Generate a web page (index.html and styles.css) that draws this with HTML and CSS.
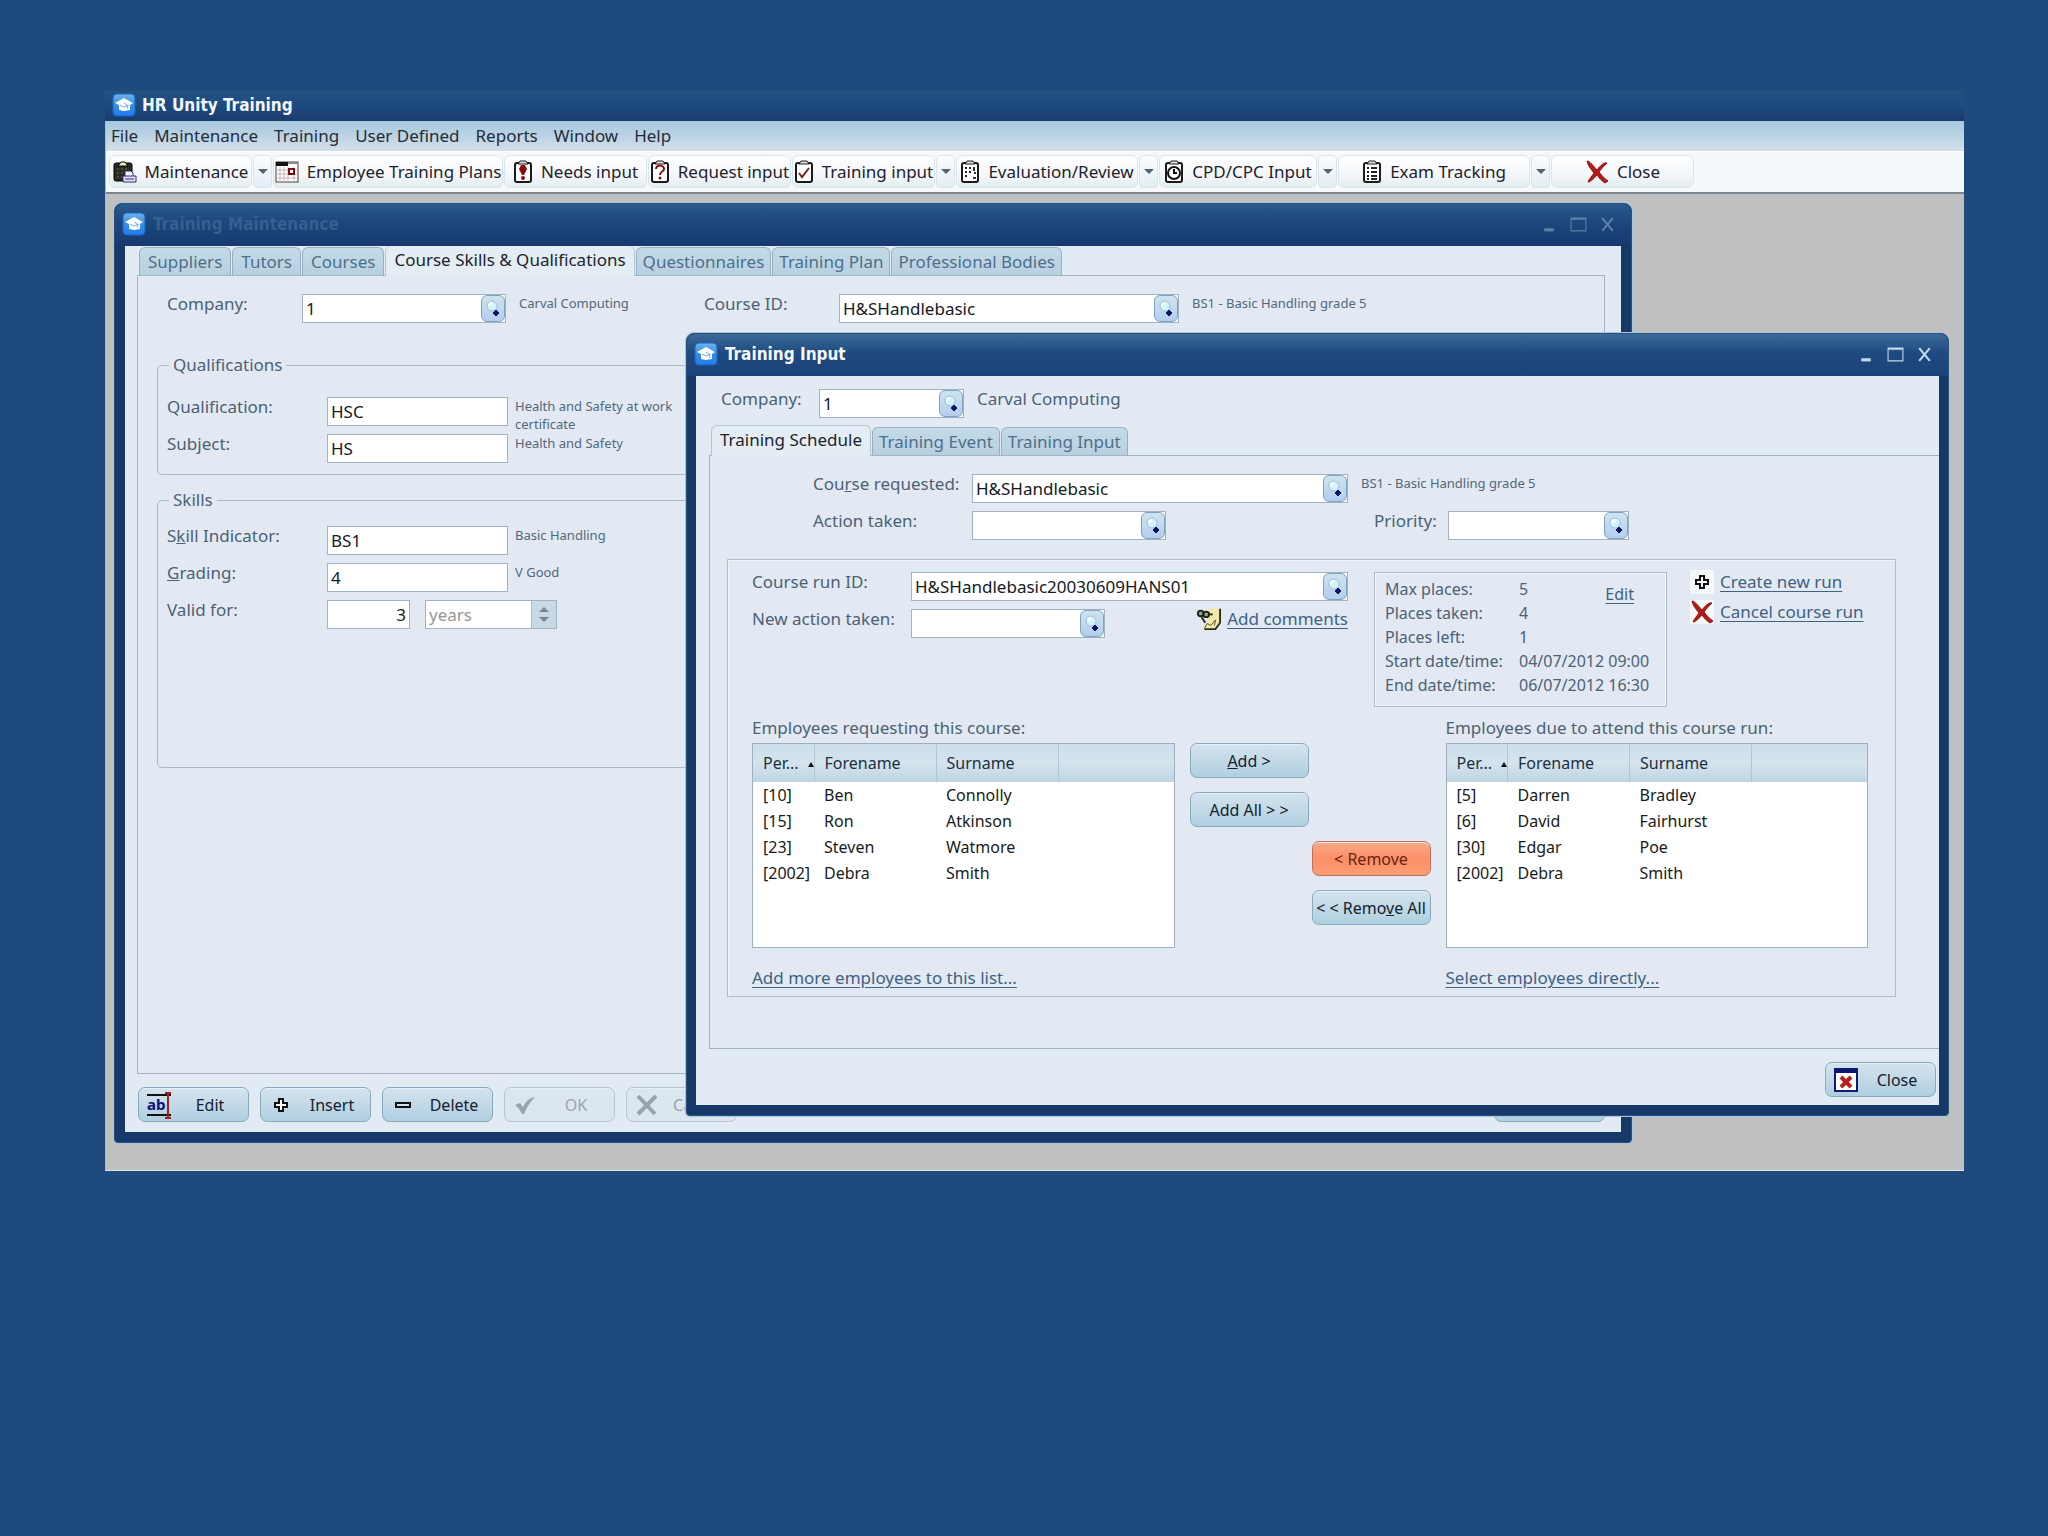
FILE: index.html
```html
<!DOCTYPE html>
<html lang="en">
<head>
<meta charset="utf-8">
<title>HR Unity Training</title>
<link rel="stylesheet" href="styles.css">
</head>
<body>
<svg class="sprite" aria-hidden="true">
  <defs>
    <linearGradient id="g-app" x1="0" y1="0" x2="0" y2="1">
      <stop offset="0" stop-color="#6fb2ea"/><stop offset="0.5" stop-color="#3a8ee0"/><stop offset="1" stop-color="#1d7cf2"/>
    </linearGradient>
    <symbol id="i-app" viewBox="0 0 24 24">
      <rect x="1" y="1" width="22" height="22" rx="4" fill="url(#g-app)" stroke="#1668c4"/>
      <path d="M12 5 L21 10 L18 12 L18 17 L12 18 L7 17 L7 12 L3 10 Z" fill="#fff"/>
      <path d="M8 12 L12 14 L17 12 M12 10 L15 12 L16 16" fill="none" stroke="#6fabe6"/>
    </symbol>
    <symbol id="i-lookup" viewBox="0 0 22 25">
      <circle cx="10" cy="10" r="5" fill="#d3f4fb" stroke="#9cc0d8"/>
      <path d="M7 10 A3 3 0 0 1 10 7" fill="none" stroke="#fff" stroke-width="2"/>
      <path d="M11 17 L14 14 L17 17 L14 20 Z" fill="#0b1466" stroke="#0b1466"/>
    </symbol>
    <symbol id="i-maint" viewBox="0 0 24 24">
      <rect x="1" y="3" width="18" height="18" rx="2" fill="#2a2c22" stroke="#000"/>
      <path d="M5 6 L8 2 L12 2 L15 6 Z" fill="#f4efb0" stroke="#000"/>
      <path d="M4 9h2M8 9h2M12 9h2M4 13h2M8 13h2M4 17h2M8 17h2" stroke="#6b6d4c"/>
      <path d="M12 11h6l2 2v4h-8z" fill="#fff" stroke="#2a2a7a"/>
      <path d="M10 16h13v6h-13z" fill="#e6e2fa" stroke="#2a2a7a"/>
      <path d="M12 19h9" stroke="#2a2a7a"/>
    </symbol>
    <symbol id="i-cal" viewBox="0 0 24 24">
      <rect x="1" y="2" width="22" height="20" fill="#fff" stroke="#4a3a3a"/>
      <path d="M1 4h12" stroke="#111" stroke-width="4"/>
      <path d="M13 3h10" stroke="#8a8a8a" stroke-width="2"/>
      <path d="M5 7v15M9 7v15M13 7v15M19 7v15M1 10h22M1 14h22M1 18h22" stroke="#c8b4b4"/>
      <rect x="14" y="9" width="5" height="5" fill="#fff" stroke="#7a0c14" stroke-width="2"/>
    </symbol>
    <symbol id="i-board" viewBox="0 0 20 24">
      <rect x="2" y="3" width="16" height="19" rx="2" fill="#fff" stroke="#1a1a1a" stroke-width="2"/>
      <path d="M5 4 L7 1 H13 L15 4 Z" fill="#ddd" stroke="#1a1a1a"/>
    </symbol>
    <symbol id="i-needs" viewBox="0 0 20 24">
      <use href="#i-board"/>
      <path d="M8 5 H12 L14 9 L11 15 H9 L6 9 Z" fill="#8a0d12"/><circle cx="10" cy="18" r="2" fill="#8a0d12"/>
    </symbol>
    <symbol id="i-request" viewBox="0 0 20 24">
      <use href="#i-board"/>
      <path d="M6 9 C6 4 14 5 14 9 C14 12 10 11 10 15" fill="none" stroke="#8a0d12" stroke-width="2"/><circle cx="10" cy="18" r="1.5" fill="#8a0d12"/>
    </symbol>
    <symbol id="i-tick" viewBox="0 0 20 24">
      <use href="#i-board"/><path d="M5 13 L8 17 L15 8" fill="none" stroke="#7a2020" stroke-width="2"/>
    </symbol>
    <symbol id="i-eval" viewBox="0 0 20 24">
      <use href="#i-board"/><path d="M6 7v12M10 7v8" stroke="#222" stroke-width="2" stroke-dasharray="2 2"/><path d="M14 7v4M14 13h2M13 18h3" stroke="#333" stroke-width="2"/>
    </symbol>
    <symbol id="i-cpd" viewBox="0 0 20 24">
      <use href="#i-board"/><circle cx="10" cy="13" r="6" fill="#fff" stroke="#111" stroke-width="2"/><path d="M10 9v4h3" fill="none" stroke="#111" stroke-width="2"/>
    </symbol>
    <symbol id="i-exam" viewBox="0 0 20 24">
      <use href="#i-board"/><path d="M5 8h2M5 12h2M5 16h2M5 19h2M9 8h6M9 12h6M9 16h6M9 19h6" stroke="#222" stroke-width="2"/>
    </symbol>
    <symbol id="i-cross" viewBox="0 0 24 24">
      <path d="M2 1 C5 1 9 7 12 10 C15 6 19 2 22 3 C19 6 16 9 14 12 C17 16 20 19 23 21 L20 23 C17 21 14 18 12 15 C9 18 6 22 3 22 C4 19 7 16 9 13 C6 9 3 6 2 1 Z" fill="#b01c18" stroke="#9a1412"/>
    </symbol>
    <symbol id="i-plus" viewBox="0 0 24 24">
      <path d="M10 6h4v4h4v4h-4v4h-4v-4h-4v-4h4z" fill="#fff" stroke="#111" stroke-width="2"/>
    </symbol>
    <symbol id="i-minus" viewBox="0 0 24 24">
      <rect x="5" y="10" width="14" height="4" fill="#cfe0ea" stroke="#111" stroke-width="2"/>
    </symbol>
    <symbol id="i-check" viewBox="0 0 24 24">
      <path d="M2 12 L7 10 L10 14 C13 8 16 5 22 4 C17 9 14 14 11 21 L9 21 C7 17 5 14 2 12Z" fill="#98a4ab"/>
    </symbol>
    <symbol id="i-xgrey" viewBox="0 0 24 24">
      <path d="M3 3 L20 21 M21 3 L3 21" stroke="#98a4ab" stroke-width="4"/>
    </symbol>
    <symbol id="i-winclose" viewBox="0 0 24 24">
      <rect x="1" y="1" width="22" height="22" fill="#fff" stroke="#101a70" stroke-width="2"/>
      <path d="M1 3h22" stroke="#0c1570" stroke-width="4"/>
      <path d="M7 9 L17 19 M17 9 L7 19" stroke="#b5201a" stroke-width="4"/>
    </symbol>
    <symbol id="i-note" viewBox="0 0 26 24">
      <path d="M12 1h13v15l-5 7h-13l1-5 4-4z" fill="#efeaa8"/>
      <path d="M25 1v15l-5 7h-12" fill="none" stroke="#2b2c14" stroke-width="2"/>
      <path d="M8 22 L11 17 L15 19 L20 13 L19 19" fill="none" stroke="#4c4d22"/>
      <circle cx="4" cy="6" r="3" fill="#8fa98f" stroke="#16220f" stroke-width="2"/><circle cx="10" cy="7" r="3" fill="#8fa98f" stroke="#16220f" stroke-width="2"/>
      <path d="M13 7h4M5 10 L9 16" stroke="#16220f" stroke-width="2"/>
    </symbol>
    <symbol id="i-edit" viewBox="0 0 24 28">
      <path d="M0 4h24M0 24h24" stroke="#111" stroke-width="2"/>
      <path d="M21 2v24M18 2h6M18 27h6" stroke="#a81c1c" stroke-width="2"/>
    </symbol>
    <symbol id="i-min" viewBox="0 0 16 16"><path d="M3 13h9" stroke="currentColor" stroke-width="3"/></symbol>
    <symbol id="i-max" viewBox="0 0 16 16"><path d="M1 2h14v12h-14zM1 3h14" fill="none" stroke="currentColor" stroke-width="1"/></symbol>
    <symbol id="i-x" viewBox="0 0 16 16"><path d="M3 2 L13 14 M13 2 L3 14" stroke="currentColor" stroke-width="2"/></symbol>
  </defs>
</svg>

<main class="app">
  <header class="app-title">
    <svg class="logo"><use href="#i-app"/></svg>
    <h1 class="title-text">HR Unity Training</h1>
  </header>
  <nav class="menubar">
    <button>File</button><button>Maintenance</button><button>Training</button><button>User Defined</button><button>Reports</button><button>Window</button><button>Help</button>
  </nav>
  <div class="toolbar">
    <button class="tool"><svg class="ico"><use href="#i-maint"/></svg>Maintenance</button><button class="drop" aria-label="Maintenance options"></button>
    <button class="tool tool-wide"><svg class="ico"><use href="#i-cal"/></svg>Employee Training Plans</button>
    <button class="tool"><svg class="ico-sm"><use href="#i-needs"/></svg>Needs input</button>
    <button class="tool"><svg class="ico-sm"><use href="#i-request"/></svg>Request input</button>
    <button class="tool"><svg class="ico-sm"><use href="#i-tick"/></svg>Training input</button><button class="drop" aria-label="Training input options"></button>
    <button class="tool tool-eval"><svg class="ico-sm"><use href="#i-eval"/></svg>Evaluation/Review</button><button class="drop" aria-label="Evaluation options"></button>
    <button class="tool tool-cpd"><svg class="ico-sm"><use href="#i-cpd"/></svg>CPD/CPC Input</button><button class="drop" aria-label="CPD options"></button>
    <button class="tool tool-exam"><svg class="ico-sm"><use href="#i-exam"/></svg>Exam Tracking</button><button class="drop" aria-label="Exam options"></button>
    <button class="tool"><svg class="ico"><use href="#i-cross"/></svg>Close</button>
  </div>

  <div class="desk">
    <section class="win win-maint">
      <header class="win-title">
        <svg class="logo"><use href="#i-app"/></svg>
        <h2 class="title-text">Training Maintenance</h2>
        <div class="win-ctl">
          <button aria-label="Minimise"><svg><use href="#i-min"/></svg></button>
          <button aria-label="Maximise"><svg><use href="#i-max"/></svg></button>
          <button aria-label="Close window"><svg><use href="#i-x"/></svg></button>
        </div>
      </header>
      <div class="win-body maint-body">
        <div class="tabs" role="tablist">
          <button class="tab" role="tab">Suppliers</button><button class="tab" role="tab">Tutors</button><button class="tab" role="tab">Courses</button><button class="tab active" role="tab" aria-selected="true">Course Skills &amp; Qualifications</button><button class="tab" role="tab">Questionnaires</button><button class="tab" role="tab">Training Plan</button><button class="tab" role="tab">Professional Bodies</button>
        </div>
        <div class="panel maint-panel">
          <div class="row maint-top">
            <label class="lbl lbl-135" for="m-company">Company:</label>
            <div class="field f-204"><input id="m-company" value="1"><button class="look" aria-label="Look up company"><svg><use href="#i-lookup"/></svg></button></div>
            <span class="note note-company">Carval Computing</span>
            <label class="lbl lbl-135" for="m-course">Course ID:</label>
            <div class="field f-340"><input id="m-course" value="H&amp;SHandlebasic"><button class="look" aria-label="Look up course"><svg><use href="#i-lookup"/></svg></button></div>
            <span class="note">BS1 - Basic Handling grade 5</span>
          </div>
          <fieldset class="box">
            <legend>Qualifications</legend>
            <div class="row"><label class="lbl lbl-160" for="m-qual">Qualification:</label><div class="field f-181"><input id="m-qual" value="HSC"></div><span class="note note-wrap">Health and Safety at work certificate</span></div>
            <div class="row"><label class="lbl lbl-160" for="m-subj">Subject:</label><div class="field f-181"><input id="m-subj" value="HS"></div><span class="note note-wrap">Health and Safety</span></div>
          </fieldset>
          <fieldset class="box box-skills">
            <legend>Skills</legend>
            <div class="row"><label class="lbl lbl-160" for="m-skill">S<u>k</u>ill Indicator:</label><div class="field f-181"><input id="m-skill" value="BS1"></div><span class="note note-wrap">Basic Handling</span></div>
            <div class="row"><label class="lbl lbl-160" for="m-grade"><u>G</u>rading:</label><div class="field f-181"><input id="m-grade" value="4"></div><span class="note note-wrap">V Good</span></div>
            <div class="row"><label class="lbl lbl-160" for="m-valid">Valid for:</label><div class="field f-83"><input class="num" id="m-valid" value="3"></div>
              <div class="field f-unit"><select disabled aria-label="Validity unit"><option>years</option></select><span class="spin"></span></div></div>
          </fieldset>
        </div>
        <div class="actions">
          <button class="btn"><span class="ico-edit"><svg><use href="#i-edit"/></svg><b>ab</b></span><span class="cap">Edit</span></button>
          <button class="btn"><svg class="ico"><use href="#i-plus"/></svg><span class="cap">Insert</span></button>
          <button class="btn"><svg class="ico"><use href="#i-minus"/></svg><span class="cap">Delete</span></button>
          <button class="btn" disabled><svg class="ico"><use href="#i-check"/></svg><span class="cap">OK</span></button>
          <button class="btn" disabled><svg class="ico"><use href="#i-xgrey"/></svg><span class="cap">Cancel</span></button>
          <button class="btn btn-end"><svg class="ico"><use href="#i-winclose"/></svg><span class="cap">Close</span></button>
        </div>
      </div>
    </section>

    <section class="win win-input">
      <header class="win-title">
        <svg class="logo"><use href="#i-app"/></svg>
        <h2 class="title-text">Training Input</h2>
        <div class="win-ctl">
          <button aria-label="Minimise"><svg><use href="#i-min"/></svg></button>
          <button aria-label="Maximise"><svg><use href="#i-max"/></svg></button>
          <button aria-label="Close window"><svg><use href="#i-x"/></svg></button>
        </div>
      </header>
      <div class="win-body input-body">
        <div class="row input-top">
          <label class="lbl lbl-98" for="t-company">Company:</label>
          <div class="field f-145"><input id="t-company" value="1"><button class="look" aria-label="Look up company"><svg><use href="#i-lookup"/></svg></button></div>
          <span class="lbl company-name">Carval Computing</span>
        </div>
        <div class="tabs" role="tablist">
          <button class="tab active" role="tab" aria-selected="true">Training Schedule</button><button class="tab" role="tab">Training Event</button><button class="tab" role="tab">Training Input</button>
        </div>
        <div class="panel input-panel">
          <div class="request">
            <div class="row"><label class="lbl lbl-159" for="t-course">Cou<u>r</u>se requested:</label><div class="field f-376"><input id="t-course" value="H&amp;SHandlebasic"><button class="look" aria-label="Look up course"><svg><use href="#i-lookup"/></svg></button></div><span class="note">BS1 - Basic Handling grade 5</span></div>
            <div class="row"><label class="lbl lbl-159" for="t-action">Action taken:</label><div class="field f-194"><input id="t-action"><button class="look" aria-label="Look up action"><svg><use href="#i-lookup"/></svg></button></div>
              <label class="lbl lbl-priority" for="t-prio">Priority:</label><div class="field f-181"><input id="t-prio"><button class="look" aria-label="Look up priority"><svg><use href="#i-lookup"/></svg></button></div></div>
          </div>
          <div class="group">
            <div class="run">
              <div class="run-form">
                <div class="row"><label class="lbl lbl-159" for="t-run">Course run ID:</label><div class="field grow"><input id="t-run" value="H&amp;SHandlebasic20030609HANS01"><button class="look" aria-label="Look up run"><svg><use href="#i-lookup"/></svg></button></div></div>
                <div class="row"><label class="lbl lbl-159" for="t-new">New action taken:</label><div class="field f-194"><input id="t-new"><button class="look" aria-label="Look up new action"><svg><use href="#i-lookup"/></svg></button></div>
                  <a class="link comments" href="#"><svg class="ico"><use href="#i-note"/></svg><span>Add comments</span></a></div>
              </div>
              <div class="places">
                <dl>
                  <dt>Max places:</dt><dd>5</dd>
                  <dt>Places taken:</dt><dd>4</dd>
                  <dt>Places left:</dt><dd>1</dd>
                  <dt>Start date/time:</dt><dd>04/07/2012 09:00</dd>
                  <dt>End date/time:</dt><dd>06/07/2012 16:30</dd>
                </dl>
                <a class="link places-edit" href="#"><span>Edit</span></a>
              </div>
              <div class="run-links">
                <a class="link" href="#"><svg class="ico chip"><use href="#i-plus"/></svg><span>Create new run</span></a>
                <a class="link" href="#"><svg class="ico chip"><use href="#i-cross"/></svg><span>Cancel course run</span></a>
              </div>
            </div>
            <div class="lists">
              <div class="list">
                <span class="lbl">Employees requesting this course:</span>
                <div class="grid"><table>
                  <thead><tr><th class="c-per">Per...<i class="sort"></i></th><th class="c-name">Forename</th><th class="c-name">Surname</th><th></th></tr></thead>
                  <tbody>
                    <tr><td>[10]</td><td>Ben</td><td>Connolly</td><td></td></tr>
                    <tr><td>[15]</td><td>Ron</td><td>Atkinson</td><td></td></tr>
                    <tr><td>[23]</td><td>Steven</td><td>Watmore</td><td></td></tr>
                    <tr><td>[2002]</td><td>Debra</td><td>Smith</td><td></td></tr>
                  </tbody></table></div>
                <a class="link" href="#"><span>Add more employees to this list...</span></a>
              </div>
              <div class="moves">
                <button class="btn move"><span><u>A</u>dd &gt;</span></button>
                <button class="btn move"><span>Add All &gt; &gt;</span></button>
                <button class="btn move back hot"><span>&lt; Remove</span></button>
                <button class="btn move back"><span>&lt; &lt; Remo<u>v</u>e All</span></button>
              </div>
              <div class="list">
                <span class="lbl">Employees due to attend this course run:</span>
                <div class="grid"><table>
                  <thead><tr><th class="c-per">Per...<i class="sort"></i></th><th class="c-name">Forename</th><th class="c-name">Surname</th><th></th></tr></thead>
                  <tbody>
                    <tr><td>[5]</td><td>Darren</td><td>Bradley</td><td></td></tr>
                    <tr><td>[6]</td><td>David</td><td>Fairhurst</td><td></td></tr>
                    <tr><td>[30]</td><td>Edgar</td><td>Poe</td><td></td></tr>
                    <tr><td>[2002]</td><td>Debra</td><td>Smith</td><td></td></tr>
                  </tbody></table></div>
                <a class="link" href="#"><span>Select employees directly...</span></a>
              </div>
            </div>
          </div>
        </div>
        <div class="input-foot">
          <button class="btn btn-end"><svg class="ico"><use href="#i-winclose"/></svg><span class="cap">Close</span></button>
        </div>
      </div>
    </section>
  </div>
</main>
</body>
</html>
```
FILE: styles.css
```css
* { box-sizing: border-box; }
body {
  margin: 0;
  min-height: 100vh;
  background: #1f4a7d;
  color: #4c6274;
  font: 17px/20px "Noto Sans", "Open Sans", sans-serif;
}
button, input, select { font: inherit; color: inherit; margin: 0; padding: 0; border: 0; background: none; }
h1, h2, dl, dd { margin: 0; }
svg { display: block; flex: none; }
.sprite { position: absolute; width: 0; height: 0; }

.app { margin: 90px 84px 0 105px; border-left: 1px solid #a9bccb; border-bottom: 1px solid #dfe6ee; }
.app-title {
  display: flex; align-items: center; gap: 6px;
  height: 31px; margin-left: -1px; padding: 0 7px 2px;
  background: linear-gradient(#24527f, #1d4a80 50%, #1a3c6c);
  color: #f2f7ff;
}
.title-text { font: bold 17px/20px "DejaVu Sans Condensed", "Noto Sans", sans-serif; }
.logo { width: 24px; height: 26px; }

.menubar {
  display: flex; gap: 16px; height: 30px; padding: 0 5px;
  background: linear-gradient(#a6c9df, #bcd3e4 50%, #d3e0ea);
  color: #1f2d3a;
}
.toolbar {
  display: flex; gap: 1px; height: 43px; padding: 3px 3px 4px;
  background: #f6f9fc; border-top: 1px solid #fff; border-bottom: 2px solid #7d868e;
  color: #1c232a;
}
.tool {
  display: flex; align-items: center; justify-content: center; gap: 8px;
  width: 143px; white-space: nowrap;
  border: 1px solid #dbe6ec; border-radius: 6px;
  background: linear-gradient(#fdfeff, #f4f7fa 60%, #e3edf1);
}
.tool-wide { width: 230px; }
.tool-eval { width: 182px; }
.tool-cpd { width: 158px; }
.tool-exam { width: 192px; }
.drop { width: 19px; border: 1px solid #dbe6ec; border-radius: 4px; background: linear-gradient(#fbfdfe, #e2eef4); }
.drop::after { content: ""; display: block; width: 0; margin: 0 auto; border: 5px solid transparent; border-top-color: #56646f; border-bottom: 0; }
.ico { width: 24px; height: 24px; }
.ico-sm { width: 20px; height: 24px; }

.desk { position: relative; min-height: 976px; background: #c1c0c0; }
.win {
  position: absolute;
  padding: 0 10px 10px;
  background: #17396a;
  border: 1px solid #2a5280; border-radius: 8px 8px 4px 4px;
  box-shadow: 0 0 0 1px #a9c3d8;
}
.win-maint { left: 8px; right: 332px; top: 9px; }
.win-input { left: 580px; right: 15px; top: 139px; padding: 0 9px 10px; }
.win-title {
  display: flex; align-items: center; gap: 7px;
  height: 42px; margin: 0 -10px; padding: 0 15px 2px 7px;
  border-radius: 8px 8px 0 0;
  background: linear-gradient(#2a5a8c, #1c467c 45%, #163a6e);
  color: #f4f8ff;
}
.win-maint .win-title { color: #35608f; }
.win-input .win-title { margin: 0 -9px; background: linear-gradient(#3c6a98, #1f4a80 45%, #1b4377); }
.win-ctl { display: flex; gap: 12px; margin-left: auto; }
.win-ctl svg { width: 17px; height: 17px; }
.win-maint .win-ctl { color: #5d80a6; }
.win-input .win-ctl { color: #c3d8ea; }
.win-body { background: #e2ebf4; }

.tabs { display: flex; align-items: flex-end; }
.tab {
  height: 28px; padding: 0 8px; margin-right: 1px; white-space: nowrap;
  color: #4d708a; background: linear-gradient(#c4dae7, #b7d0e0);
  border: 1px solid #94b0c2; border-bottom: 0; border-radius: 6px 6px 0 0;
}
.tab.active {
  height: 31px; margin-bottom: -1px; padding-bottom: 2px; position: relative;
  color: #1b242c; background: #e4ecf4; border-color: #b4c6d3;
}
.tab.active ~ .tab { padding: 0 6px; }
.panel { border: 1px solid #9fb5c5; background: #e2e9f2; }

.row { display: flex; align-items: flex-start; }
.row + .row { margin-top: 8px; }
.lbl { flex: none; white-space: nowrap; }
.lbl-98 { width: 98px; }
.lbl-135 { width: 135px; }
.lbl-159 { width: 159px; }
.lbl-160 { width: 160px; }
.lbl-priority { width: 74px; margin-left: 208px; }
.field { display: flex; height: 29px; background: #fff; border: 1px solid #9fb3c2; color: #151a1f; }
.field input, .field select { flex: 1; min-width: 0; width: 100%; padding: 0 3px; appearance: none; outline: 0; }
.field .num { text-align: right; }
.field select { color: #979797; opacity: 1; }
.f-83 { width: 83px; }
.f-145 { width: 145px; }
.f-181 { width: 181px; }
.f-194 { width: 194px; }
.f-204 { width: 204px; }
.f-340 { width: 340px; }
.f-376 { width: 376px; }
.f-unit { width: 132px; margin-left: 15px; }
.grow { flex: 1; }
.look { flex: none; width: 24px; border: 1px solid #7fa3bd; border-radius: 6px; background: linear-gradient(#cfe3ee, #b4cdf0); }
.look svg { width: 22px; height: 25px; }
.spin { display: flex; flex-direction: column; justify-content: center; align-items: center; gap: 5px; width: 25px; background: #c7d9e3; border-left: 1px solid #a9bfcc; }
.spin::before, .spin::after { content: ""; border: 5px solid transparent; }
.spin::before { border-top: 0; border-bottom-color: #77868f; }
.spin::after { border-bottom: 0; border-top-color: #77868f; }
.note { margin-left: 13px; font-size: 13px; line-height: 18px; white-space: nowrap; color: #53687a; }
.note-company { width: 185px; }
.note-wrap { width: 170px; height: 29px; margin-left: 7px; white-space: normal; }

.maint-body { padding: 0 16px 10px 12px; }
.maint-body .tabs { padding-left: 2px; }
.maint-body .tab.active { height: 30px; border-top: 0; }
.maint-panel { min-height: 799px; padding: 18px 19px 0; }
.maint-top { padding-left: 10px; }
.box { margin: 32px 0 0; padding: 22px 10px 10px 9px; border: 1px solid #a9bac8; border-radius: 5px; height: 120px; }
.box legend { margin-left: 2px; padding: 0 4px; }
.box-skills { margin-top: 15px; padding-top: 16px; height: 278px; }
.actions { display: flex; gap: 11px; padding: 13px 0 0 1px; font-size: 16px; }
.btn {
  display: flex; align-items: center;
  width: 111px; height: 35px; padding: 0 8px; white-space: nowrap;
  color: #14222e; border: 1px solid #89a9bd; border-radius: 7px;
  background: linear-gradient(#d3e3ee, #c3d9e7 50%, #aed0e0);
  box-shadow: inset 0 1px 0 #e4eff6;
}
.btn:disabled { color: #98a6b0; border-color: #b4c5d1; background: #dbe6ef; }
.btn-end { margin-left: auto; }
.cap { flex: 1; text-align: center; padding-left: 9px; }
.ico-edit { position: relative; width: 24px; height: 28px; }
.ico-edit svg { width: 24px; height: 28px; }
.ico-edit b { position: absolute; left: 0; top: 3px; color: #10107a; font-size: 15px; }

.input-top { padding: 13px 0 0 25px; }
.company-name { margin-left: 13px; }
.input-body .tabs { padding: 7px 0 0 15px; }
.input-panel { margin-left: 13px; border-right: 0; padding: 18px 43px 51px 17px; }
.request { padding-left: 86px; }
.group { margin-top: 19px; padding: 12px 27px 0 24px; height: 438px; border: 1px solid #aebfcc; box-shadow: inset 1px 1px 0 #f0f5fa; }
.run { display: flex; }
.run-form { width: 596px; }
.link { display: flex; align-items: center; gap: 6px; color: #3f6284; text-decoration: none; white-space: nowrap; }
.link span { text-decoration: underline; text-underline-offset: 3px; }
.comments { height: 20px; margin-left: auto; }
.places { display: flex; width: 293px; height: 135px; margin-left: 26px; padding: 4px 0 0 10px; border: 1px solid #a9bccb; box-shadow: inset 1px 1px 0 #f4f8fc, inset -1px -1px 0 #f4f8fc; position: relative; font-size: 16px; }
.places dl { display: grid; grid-template-columns: 134px auto; grid-auto-rows: 24px; line-height: 24px; white-space: nowrap; }
.places-edit { position: absolute; right: 32px; top: 11px; }
.run-links { display: flex; flex-direction: column; gap: 6px; margin: -2px 0 0 23px; }
.chip { background: #f5f8fb; }

.lists { display: grid; grid-template-columns: 1fr 241px 1fr; gap: 15px; margin-top: 11px; }
.list { display: flex; flex-direction: column; align-items: flex-start; }
.grid { width: 100%; height: 205px; margin: 5px 0 20px; border: 1px solid #9db0bf; background: #fff; color: #161b20; font-size: 16px; }
.grid table { width: 100%; border-collapse: collapse; table-layout: fixed; }
.grid th { height: 38px; padding: 0 0 0 10px; text-align: left; font-weight: normal; color: #1c3040; border-right: 1px solid #b0c8d6; background: linear-gradient(#cbdfeb, #d5e3ed 50%, #bed5e3); white-space: nowrap; }
.grid th:last-child { border-right: 0; }
.grid td { height: 26px; padding: 0 0 0 10px; white-space: nowrap; }
.c-per { width: 61px; }
.c-name { width: 122px; }
.sort { display: inline-block; margin-left: 9px; border: 3px solid transparent; border-top: 0; border-bottom: 5px solid #111; vertical-align: middle; }
.moves { display: flex; flex-direction: column; gap: 14px; padding-top: 25px; font-size: 16px; }
.move { justify-content: center; width: 119px; padding: 0; }
.back { align-self: flex-end; }
.hot { color: #6a2414; border-color: #c0705a; background: linear-gradient(#fba888, #fb8f68 50%, #fb9c72); }
.input-foot { display: flex; padding: 13px 3px 8px; font-size: 16px; }
```
